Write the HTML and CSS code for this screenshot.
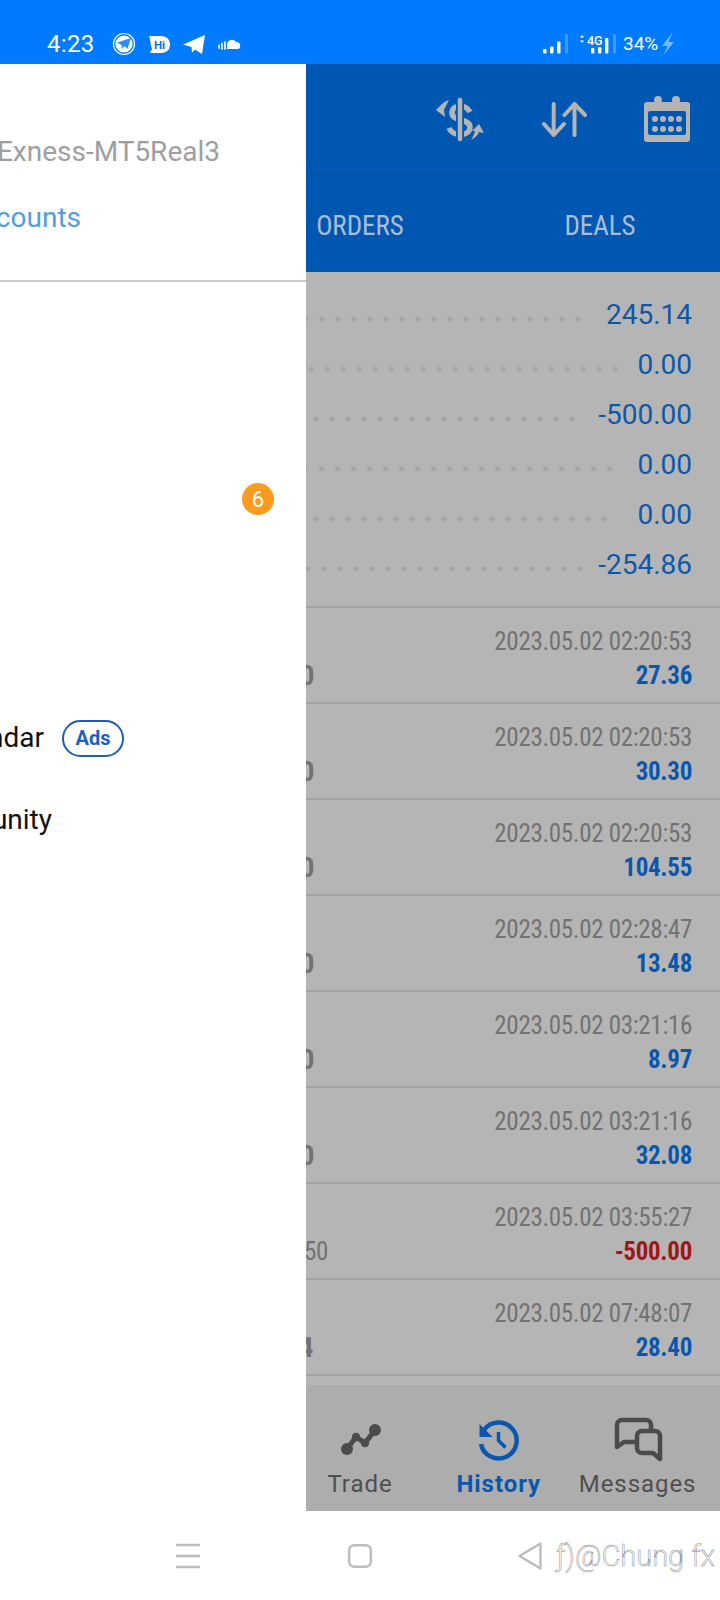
FILE: index.html
```html
<!DOCTYPE html>
<html lang="en">
<head>
<meta charset="utf-8">
<title>History</title>
<link rel="stylesheet" href="styles.css">
</head>
<body>
<div class="screen">
  <div class="status">
    <div class="status-left">
      <span class="clock">4:23</span>
      <svg class="notif" viewBox="112 30 130 28" width="130" height="28">
        <circle cx="124" cy="44" r="10.5" fill="none" stroke="#fff" stroke-width="1.2"/>
        <circle cx="124" cy="44" r="8.6" fill="#fff"/>
        <path d="M117 42.5 L131 38 L127.5 49 L124.5 46 L122 49 L121.5 45 Z" fill="#2b8eff"/>
        <path d="M151 36 H161 C167 36 170 40 170 44.5 C170 49 167 53 161 53 H150 L152 49 C150 45 151 40 149 36 Z" fill="#fff"/>
        <text x="154" y="49" class="hi">Hi</text>
        <path d="M183 44.5 L205 35 L202 54 L195 49.5 L192 52.5 L191.5 47 Z" fill="#fff"/>
        <path d="M227 49 V44 C228 40 233 38 236 42 C239 42 241 44 240 47 C240 48.5 239 49 237 49 Z" fill="#fff"/>
        <path d="M219 45.5 V48 M222 43.5 V49 M225 42 V49" stroke="#cfe4ff" stroke-width="2" stroke-linecap="round" fill="none"/>
      </svg>
    </div>
    <div class="status-right">
      <svg viewBox="540 30 80 28" width="80" height="28">
        <rect x="543" y="49" width="3.5" height="4.5" rx="1" fill="#fff"/>
        <rect x="550" y="46.5" width="3.5" height="7" rx="1" fill="#fff"/>
        <rect x="557" y="41.5" width="3.5" height="12" rx="1" fill="#fff"/>
        <rect x="565" y="34" width="3" height="19.5" rx="1" fill="#3d9aff"/>
        <path d="M580 37.5 L582 35 L584 37.5 Z M580 40.5 L582 43 L584 40.5 Z" fill="#fff"/>
        <text x="587" y="45" class="net">4G</text>
        <rect x="591" y="48" width="3.4" height="5.5" rx="1" fill="#fff"/>
        <rect x="598" y="47" width="3.4" height="6.5" rx="1" fill="#fff"/>
        <rect x="605" y="38" width="3.4" height="15.5" rx="1" fill="#fff"/>
        <rect x="613" y="34" width="3" height="19.5" rx="1" fill="#3d9aff"/>
      </svg>
      <span class="battery">34%</span>
      <svg viewBox="660 30 16 28" width="16" height="28">
        <path d="M673 32 L662 46 H667.5 L663.5 55 L674 42 H668.5 Z" fill="#74b6ff"/>
      </svg>
    </div>
  </div>

  <header class="toolbar">
    <svg viewBox="436 94 50 50" width="50" height="50" class="tool-a">
      <path d="M470 112 C466 104 452 104 452 113 C452 122 470 118 470 127 C470 137 453 137 449 128" fill="none" stroke="#b4b4b4" stroke-width="5.5"/>
      <path d="M460 100 V139" stroke="#0057b2" stroke-width="8"/>
      <path d="M460 100 V139" stroke="#b4b4b4" stroke-width="4.5" stroke-linecap="round"/>
      <path d="M449 100 C445 101 443 103 441 105 L436 110 L445 117 L444 110 C445 107 447 104 449 100 Z" fill="#b4b4b4"/>
      <path d="M471 140 C475 138 478 135 479 132 L484 133 L479 124 L472 131 L475 131 C474 134 473 137 471 140 Z" fill="#b4b4b4"/>
    </svg>
    <svg viewBox="542 94 46 50" width="46" height="50" class="tool-b">
      <path d="M553.7 104 V135 M544 124 L553.7 135 L564 124 M574.5 135 V104 M564.5 115 L574.5 104 L585 115" fill="none" stroke="#b4b4b4" stroke-width="4" stroke-linecap="round" stroke-linejoin="round"/>
    </svg>
    <svg viewBox="642 94 50 50" width="50" height="50" class="tool-c">
      <rect x="644" y="102" width="46" height="40" rx="3" fill="#b4b4b4"/>
      <circle cx="658" cy="100" r="4" fill="#b4b4b4"/>
      <circle cx="676" cy="100" r="4" fill="#b4b4b4"/>
      <rect x="648" y="111" width="38" height="24" rx="2" fill="#0057b2"/>
      <g fill="#b4b4b4">
        <circle cx="655" cy="119" r="3"/><circle cx="663" cy="119" r="3"/><circle cx="671" cy="119" r="3"/><circle cx="679" cy="119" r="3"/>
        <circle cx="655" cy="129" r="3"/><circle cx="663" cy="129" r="3"/><circle cx="671" cy="129" r="3"/><circle cx="679" cy="129" r="3"/>
      </g>
    </svg>
  </header>

  <nav class="tabs">
    <span class="tab"></span>
    <span class="tab">ORDERS</span>
    <span class="tab">DEALS</span>
  </nav>

  <main class="content">
    <section class="summary">
      <div class="sum-row"><span class="dots m21"></span><span class="sum-val">245.14</span></div>
      <div class="sum-row"><span class="dots m15"></span><span class="sum-val">0.00</span></div>
      <div class="sum-row"><span class="dots m19"></span><span class="sum-val">-500.00</span></div>
      <div class="sum-row"><span class="dots m21"></span><span class="sum-val">0.00</span></div>
      <div class="sum-row"><span class="dots m26"></span><span class="sum-val">0.00</span></div>
      <div class="sum-row"><span class="dots m11"></span><span class="sum-val">-254.86</span></div>
    </section>
    <article class="deal"><div class="deal-time">2023.05.02 02:20:53</div><div class="deal-line"><span class="deal-left">0</span><span class="deal-amt">27.36</span></div></article>
    <article class="deal"><div class="deal-time">2023.05.02 02:20:53</div><div class="deal-line"><span class="deal-left">0</span><span class="deal-amt">30.30</span></div></article>
    <article class="deal"><div class="deal-time">2023.05.02 02:20:53</div><div class="deal-line"><span class="deal-left">0</span><span class="deal-amt">104.55</span></div></article>
    <article class="deal"><div class="deal-time">2023.05.02 02:28:47</div><div class="deal-line"><span class="deal-left">0</span><span class="deal-amt">13.48</span></div></article>
    <article class="deal"><div class="deal-time">2023.05.02 03:21:16</div><div class="deal-line"><span class="deal-left">0</span><span class="deal-amt">8.97</span></div></article>
    <article class="deal"><div class="deal-time">2023.05.02 03:21:16</div><div class="deal-line"><span class="deal-left">0</span><span class="deal-amt">32.08</span></div></article>
    <article class="deal"><div class="deal-time">2023.05.02 03:55:27</div><div class="deal-line"><span class="deal-left plain">50</span><span class="deal-amt loss">-500.00</span></div></article>
    <article class="deal"><div class="deal-time">2023.05.02 07:48:07</div><div class="deal-line"><span class="deal-left narrow">4</span><span class="deal-amt">28.40</span></div></article>
  </main>

  <nav class="bottom-nav">
    <div class="nav-item"></div>
    <div class="nav-item"></div>
    <div class="nav-item">
      <svg viewBox="333 1415 52 48" width="52" height="48">
        <path d="M346 1449 L355 1437 L364 1443 L374 1430" fill="none" stroke="#4b4b4b" stroke-width="5"/>
        <circle cx="346" cy="1449" r="6" fill="#4b4b4b"/><circle cx="355" cy="1437" r="4.2" fill="#4b4b4b"/>
        <circle cx="364" cy="1443" r="4.2" fill="#4b4b4b"/><circle cx="374" cy="1430" r="6" fill="#4b4b4b"/>
      </svg>
      <span class="nav-label">Trade</span>
    </div>
    <div class="nav-item active">
      <svg viewBox="473 1415 52 48" width="52" height="48">
        <path d="M484 1430 A18 18 0 1 1 481 1444" fill="none" stroke="#0a57ad" stroke-width="4.5"/>
        <path d="M479.5 1424 V1437 H492.5 Z" fill="#0a57ad"/>
        <path d="M498.5 1432 V1440.5 L505.5 1447.5" fill="none" stroke="#0a57ad" stroke-width="3.5"/>
      </svg>
      <span class="nav-label">History</span>
    </div>
    <div class="nav-item">
      <svg viewBox="612 1415 52 48" width="52" height="48">
        <path d="M651 1429 V1425 a5 5 0 0 0 -5 -5 H622 a5 5 0 0 0 -5 5 V1447 l7 -5 H635" fill="none" stroke="#4b4b4b" stroke-width="4.5" stroke-linejoin="round"/>
        <path d="M642 1431 H655 a5 5 0 0 1 5 5 V1459 l-7 -6 H642 a5 5 0 0 1 -5 -5 V1436 a5 5 0 0 1 5 -5 Z" fill="none" stroke="#4b4b4b" stroke-width="4.5" stroke-linejoin="round"/>
      </svg>
      <span class="nav-label">Messages</span>
    </div>
  </nav>

  <footer class="sysbar">
    <svg class="sys-menu" viewBox="0 0 26 26" width="26" height="26">
      <path d="M1 2 H25 M1 13 H25 M1 24 H25" stroke="#bdbdbd" stroke-width="2.4"/>
    </svg>
    <svg class="sys-home" viewBox="0 0 24 24" width="24" height="24">
      <rect x="1.2" y="1.2" width="21.6" height="21.6" rx="5" fill="none" stroke="#bdbdbd" stroke-width="2.4"/>
    </svg>
    <svg class="sys-back" viewBox="0 0 24 28" width="24" height="28">
      <path d="M22.5 1.5 V26.5 L1.5 14 Z" fill="none" stroke="#bdbdbd" stroke-width="2.4" stroke-linejoin="round"/>
    </svg>
    <span class="watermark">ƒ)@Chung fx</span>
  </footer>

  <aside class="drawer">
    <div class="clip server"><span>Exness-MT5Real3</span></div>
    <div class="clip accounts"><span>Manage accounts</span></div>
    <div class="divider"></div>
    <ul class="menu">
      <li class="menu-row"></li>
      <li class="menu-row"></li>
      <li class="menu-row"><span class="badge">6</span></li>
      <li class="menu-row"></li>
      <li class="menu-row"></li>
      <li class="menu-row"><div class="clip cal"><span>Economic calendar</span></div><span class="ads">Ads</span></li>
      <li class="menu-row"><div class="clip comm"><span>Traders Community</span></div></li>
    </ul>
  </aside>
</div>
</body>
</html>
```

FILE: styles.css
```css
* { box-sizing: border-box; margin: 0; padding: 0; }
html, body { width: 720px; height: 1600px; overflow: hidden; background: #fff; }
body { font-family: Roboto, "Liberation Sans", sans-serif; }

.screen { position: relative; width: 720px; height: 1600px; display: flex; flex-direction: column; overflow: hidden; }

/* status bar */
.status { height: 64px; flex: none; background: #007bff; color: #fff; display: flex; justify-content: space-between; padding: 30px 44px 0 47px; }
.status-left, .status-right { display: flex; align-items: center; height: 28px; }
.clock { font-size: 24px; line-height: 28px; width: 47px; letter-spacing: .3px; }
.notif { margin-left: 18px; }
.hi { font: 700 11.5px Roboto, sans-serif; fill: #0b6fe0; }
.net { font: 500 12.5px Roboto, sans-serif; fill: #fff; }
.battery { font-size: 19px; line-height: 28px; margin: 0 1px 0 3px; width: 36px; }

/* toolbar */
.toolbar { height: 111px; flex: none; background: #0057b2; border-bottom: 1px solid #004fa3; display: flex; align-items: center; justify-content: flex-end; padding: 0 28px 0 0; }
.tool-b { margin-left: 56px; }
.tool-c { margin-left: 54px; }

/* tabs */
.tabs { height: 97px; flex: none; background: #0057b2; display: grid; grid-template-columns: repeat(3, 1fr); padding-top: 4px; }
.tab { display: flex; align-items: center; justify-content: center; color: #a9bcd8; font-family: "Roboto Condensed", Roboto, sans-serif; font-stretch: condensed; font-size: 27px; }

/* content */
.content { flex: 1; background: #b5b5b5; }
.summary { height: 336px; padding-top: 18px; border-bottom: 2px solid #a4a4a4; }
.sum-row { height: 50px; display: flex; padding-right: 28px; }
.sum-val { font-size: 28px; line-height: 50px; color: #0f58a9; }
.dots { flex: 1; background-image: radial-gradient(circle at 8px 29px, #a5a5a5 2.2px, transparent 2.8px); background-size: 16px 50px; background-position: right top; background-repeat: repeat-x; }
.m11 { margin-right: 10px; }
.m15 { margin-right: 14px; }
.m19 { margin-right: 18px; }
.m21 { margin-right: 20px; }
.m26 { margin-right: 25px; }

.deal { height: 96px; padding: 17px 28px 0 0; border-bottom: 2px solid #a4a4a4; font-family: "Roboto Condensed", Roboto, sans-serif; font-stretch: condensed; }
.deal-time { line-height: 34px; font-size: 25px; letter-spacing: -.3px; color: #727272; text-align: right; }
.deal-line { display: flex; justify-content: space-between; line-height: 34px; font-size: 25px; letter-spacing: -.3px; }
.deal-left { width: 314px; text-align: right; font-weight: 700; color: #727272; font-size: 28px; }
.deal-left.plain { width: 328px; font-weight: 400; font-size: 25px; }
.deal-left.narrow { width: 313px; }
.deal-amt { font-weight: 700; color: #0a57ad; }
.deal-amt.loss { color: #a11616; }

/* bottom navigation */
.bottom-nav { height: 126px; flex: none; background: #adadad; display: grid; grid-template-columns: repeat(5, 1fr); padding: 30px 13px 0 13px; }
.nav-item { display: flex; flex-direction: column; align-items: center; }
.nav-label { margin-top: 5px; line-height: 32px; font-size: 24px; letter-spacing: .95px; color: #4f4f4f; white-space: nowrap; }
.active .nav-label { color: #0a57ad; font-weight: 700; letter-spacing: .95px; }

/* system bar */
.sysbar { position: relative; height: 89px; flex: none; background: #fff; display: flex; align-items: center; padding: 0 0 0 175px; }
.sys-home { margin-left: 147px; }
.sys-back { margin-left: 146px; }
.watermark { position: absolute; left: 556px; top: 28px; font-size: 29px; line-height: 34px; font-weight: 300; color: #fff; -webkit-text-stroke: .5px #8c8c8c; white-space: nowrap; }

/* drawer */
.drawer { position: absolute; left: 0; top: 64px; width: 306px; height: 1447px; background: #fff; overflow: hidden; padding-top: 68px; }
.clip { display: flex; justify-content: flex-end; white-space: nowrap; flex: none; font-size: 28px; line-height: 40px; }
.server { width: 220px; color: #9e9ea3; }
.accounts { width: 81px; color: #4f9ee4; margin-top: 26px; }
.divider { height: 2px; margin-top: 42px; background: #cbcbcb; }
.menu { list-style: none; padding-top: 16px; }
.menu-row { height: 80px; display: flex; align-items: center; position: relative; }
.cal { width: 44px; color: #111; }
.comm { width: 52px; color: #111; padding-top: 4px; }
.ads { margin-left: 18px; width: 62px; height: 37px; border: 2px solid #1c5db5; border-radius: 19px; color: #1a5fc4; font-size: 20px; font-weight: 700; display: flex; align-items: center; justify-content: center; }
.badge { position: absolute; left: 242px; top: 25px; width: 32px; height: 32px; border-radius: 50%; background: #fb9a1e; color: #fff; font-size: 22px; display: flex; align-items: center; justify-content: center; }
```
